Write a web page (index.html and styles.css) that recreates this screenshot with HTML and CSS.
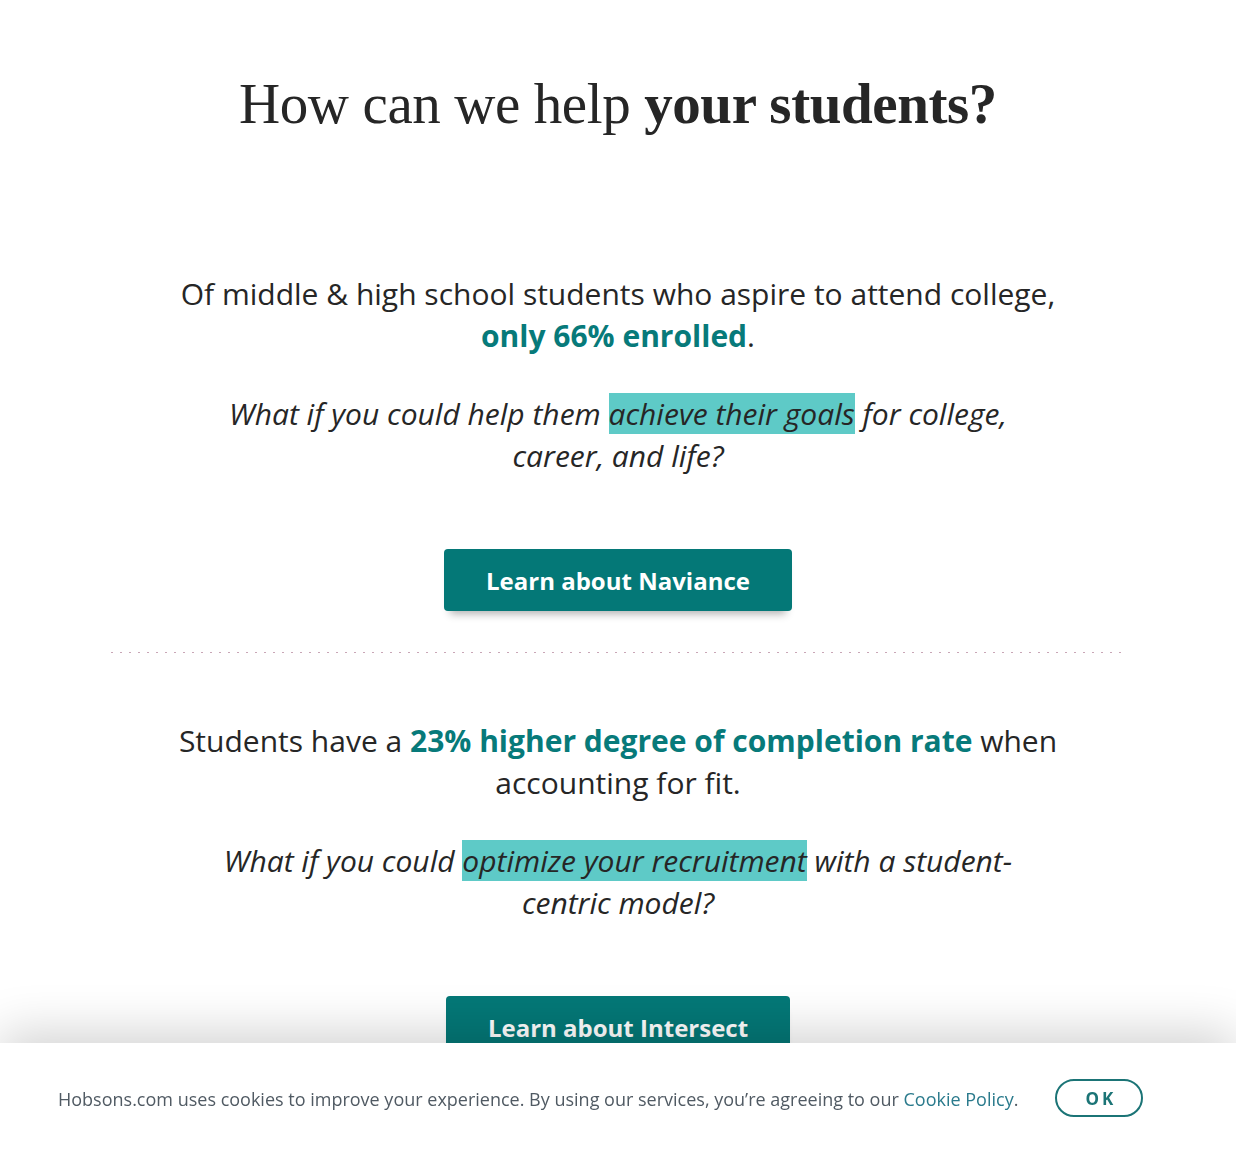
FILE: index.html
```html
<!DOCTYPE html>
<html lang="en">
<head>
<meta charset="utf-8">
<title>How can we help your students?</title>
<link rel="stylesheet" href="styles.css">
</head>
<body>
<main class="page">
  <h1 class="title">How can we help <strong>your students?</strong></h1>

  <section class="pitch">
    <p class="stat">Of middle &amp; high school students who aspire to attend college, <strong>only 66% enrolled</strong>.</p>
    <p class="question">What if you could help them <mark>achieve their goals</mark> for college, career, and life?</p>
    <a class="cta" href="#">Learn about Naviance</a>
  </section>

  <hr class="divider">

  <section class="pitch">
    <p class="stat">Students have a <strong>23% higher degree of completion rate</strong> when accounting for fit.</p>
    <p class="question">What if you could <mark>optimize your recruitment</mark> with a student-centric model?</p>
    <a class="cta" href="#">Learn about Intersect</a>
  </section>
</main>

<div class="cookie-bar">
  <p class="cookie-text">Hobsons.com uses cookies to improve your experience. By using our services, you’re agreeing to our <a href="#">Cookie Policy</a>.</p>
  <button class="cookie-ok" type="button">OK</button>
</div>
</body>
</html>
```

FILE: styles.css
```css
* { box-sizing: border-box; }

html, body {
  margin: 0;
  padding: 0;
  background: #fff;
}

body {
  font-family: "Open Sans", "Noto Sans", sans-serif;
  color: #262626;
}

.page {
  display: flex;
  flex-direction: column;
  align-items: center;
  padding-top: 70px;
  padding-bottom: 200px;
}

.title {
  margin: 0;
  font-family: "Liberation Serif", "DejaVu Serif", serif;
  font-weight: 400;
  font-size: 57px;
  line-height: 68px;
  color: #262626;
  letter-spacing: -0.4px;
}

.title strong { font-weight: 700; }

.pitch {
  display: flex;
  flex-direction: column;
  align-items: center;
  text-align: center;
}

.page > .pitch:first-of-type { margin-top: 135px; }

.stat {
  margin: 0;
  max-width: 900px;
  font-size: 30px;
  line-height: 42px;
}

.stat strong {
  color: #077a7a;
  font-weight: 700;
}

.question {
  margin: 36px 0 0;
  max-width: 820px;
  font-size: 30px;
  line-height: 42px;
  font-style: italic;
}

.question mark {
  background: #5ecac7;
  color: #262626;
}

.cta {
  margin-top: 72px;
  display: inline-flex;
  align-items: center;
  justify-content: center;
  height: 62px;
  padding: 0 42px;
  background: #047877;
  color: #fff;
  font-size: 24px;
  font-weight: 700;
  text-decoration: none;
  border-radius: 4px;
  box-shadow: 0 9px 8px -6px rgba(0, 0, 0, 0.3);
}

.divider {
  width: 1014px;
  height: 1px;
  margin: 41px 0 67px;
  border: 0;
  background: repeating-linear-gradient(90deg, #c9a6b6 0 2px, transparent 2px 9px);
}

.cookie-bar {
  position: fixed;
  left: 0;
  right: 0;
  bottom: 0;
  height: 110px;
  background: #fff;
  display: flex;
  align-items: center;
  padding: 0 58px;
  gap: 37px;
  box-shadow: 0 -10px 50px rgba(0, 0, 0, 0.18);
}

.cookie-text {
  margin: 2px 0 0;
  font-size: 18px;
  line-height: 26px;
  color: #505a63;
}

.cookie-text a {
  color: #2a7a8c;
  text-decoration: none;
}

.cookie-ok {
  width: 88px;
  height: 38px;
  border: 2px solid #1b7476;
  border-radius: 19px;
  background: #fff;
  color: #1b7476;
  font-family: "Open Sans", "Noto Sans", sans-serif;
  font-size: 17px;
  font-weight: 700;
  letter-spacing: 3px;
  padding: 0 0 0 3px;
  cursor: pointer;
}
```
